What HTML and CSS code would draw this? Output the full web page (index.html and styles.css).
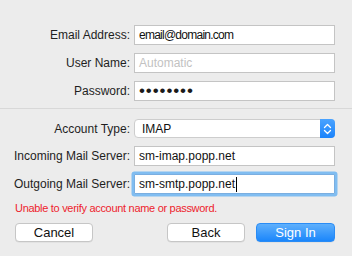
FILE: index.html
```
<!DOCTYPE html>
<html>
<head>
<meta charset="utf-8">
<link rel="stylesheet" href="styles.css">
</head>
<body>
<div class="sheet">
  <div class="grid top">
    <label class="lbl">Email Address:</label>
    <div class="field"><span class="val email">email@domain.com</span></div>
    <label class="lbl">User Name:</label>
    <div class="field"><span class="ph">Automatic</span></div>
    <label class="lbl">Password:</label>
    <div class="field"><span class="dots">••••••••</span></div>
  </div>
  <div class="sep"></div>
  <div class="grid bottom">
    <label class="lbl">Account Type:</label>
    <div class="field popup">
      <span class="val imap">IMAP</span>
      <span class="stepper">
        <svg width="15" height="18" viewBox="0 0 15 18"><path d="M4.5 7.5 L7.5 4.5 L10.5 7.5 M4.5 10.5 L7.5 13.5 L10.5 10.5" fill="none" stroke="#fff" stroke-width="1.3" stroke-linecap="round" stroke-linejoin="round"/></svg>
      </span>
    </div>
    <label class="lbl">Incoming Mail Server:</label>
    <div class="field"><span class="val">sm-imap.popp.net</span></div>
    <label class="lbl">Outgoing Mail Server:</label>
    <div class="field focus"><span class="val">sm-smtp.popp.net</span><span class="caret"></span></div>
  </div>
  <div class="error">Unable to verify account name or password.</div>
  <div class="buttons">
    <button class="btn cancel">Cancel</button>
    <div class="right">
      <button class="btn back">Back</button>
      <button class="btn primary">Sign In</button>
    </div>
  </div>
</div>
</body>
</html>
```
FILE: styles.css
```
html, body {
  margin: 0;
  padding: 0;
  background: #ececec;
  width: 352px;
  height: 256px;
  overflow: hidden;
  font-family: "Liberation Sans", Arial, sans-serif;
  font-size: 12px;
  color: #1e1e1e;
}
.sheet {
  display: flex;
  flex-direction: column;
}
.grid {
  display: grid;
  grid-template-columns: 130px 201px;
  column-gap: 4px;
  align-items: center;
}
.top {
  padding-top: 25px;
  row-gap: 8px;
}
.bottom {
  row-gap: 8px;
  padding-top: 10px;
}
.lbl {
  text-align: right;
  white-space: nowrap;
  line-height: 14px;
}
.field {
  box-sizing: border-box;
  height: 20px;
  background: #fff;
  border: 1px solid #c4c4c4;
  display: flex;
  align-items: center;
  padding-left: 4px;
  position: relative;
}
.val {
  line-height: 14px;
  color: #111;
}
.email {
  letter-spacing: -0.75px;
}
.ph {
  color: #c2c2c2;
}
.dots {
  font-size: 17px;
  line-height: 14px;
  letter-spacing: 0.9px;
  color: #1a1a1a;
}
.sep {
  height: 1px;
  background: #d8d8d8;
  margin-top: 7px;
}
.popup {
  height: 19px;
  border-radius: 4px;
  border-color: #cdcdcd;
  padding-left: 7px;
}
.imap {
  flex: 1;
}
.stepper {
  width: 15px;
  height: 19px;
  margin: -1px -1px -1px 0;
  background: linear-gradient(#4aa3ff, #1b83fb);
  border-radius: 0 4px 4px 0;
  display: flex;
  align-items: center;
  justify-content: center;
}
.stepper svg {
  display: block;
}
.focus {
  border-color: #7aaee0;
  box-shadow: 0 0 0 2.5px #80bdf1;
  border-radius: 1px;
}
.caret {
  width: 1px;
  height: 15px;
  background: #000;
  margin-left: 1px;
}
.error {
  color: #ee1d2d;
  font-size: 11px;
  letter-spacing: -0.3px;
  padding-left: 15px;
  margin-top: 8px;
  line-height: 13px;
}
.buttons {
  display: flex;
  justify-content: space-between;
  padding: 0 17px 0 15px;
  margin-top: 8px;
}
.right {
  display: flex;
  gap: 11px;
}
.btn {
  box-sizing: border-box;
  width: 78px;
  height: 19px;
  border-radius: 4px;
  border: 1px solid #c6c6c6;
  background: #fff;
  font-family: "Liberation Sans", Arial, sans-serif;
  font-size: 13px;
  color: #111;
  padding: 0;
  line-height: 17px;
  box-shadow: 0 0.5px 0.5px rgba(0,0,0,0.08);
}
.primary {
  width: 79px;
  background: linear-gradient(#5fb0fc, #1b86fb);
  border-color: #2a8cf5;
  color: #fff;
}
```
